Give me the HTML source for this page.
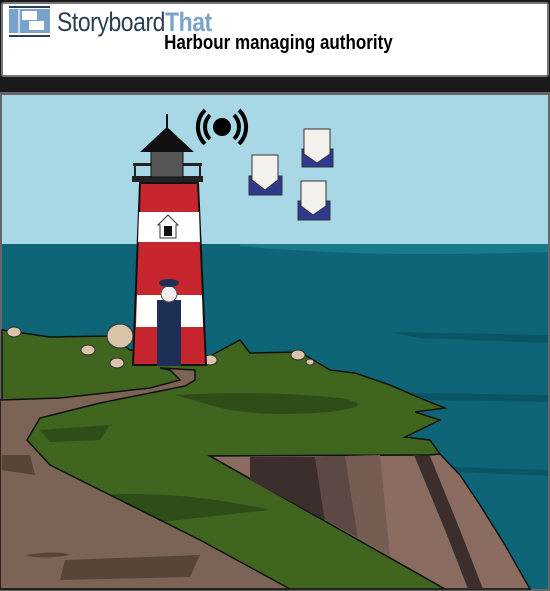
<!DOCTYPE html>
<html><head><style>
body{margin:0;width:550px;height:591px;background:#1b1b1b;overflow:hidden;font-family:"Liberation Sans",sans-serif}
.hdr{position:absolute;left:1px;top:2px;width:544px;height:71px;background:#fff;border:2px solid #777;border-radius:3px}
.logo{position:absolute;left:54px;top:3px;font-size:27px;color:#2c3e55;letter-spacing:-0.5px;transform:scaleX(0.85);transform-origin:left}
.logo b{color:#7aa3cc}
.title{position:absolute;left:0;right:0;top:28px;text-align:center;font-weight:bold;font-size:20px;padding-left:8px;transform:scaleX(0.85)}
.panel{position:absolute;left:0;top:92px;width:550px;height:499px}
</style></head><body>
<div class="hdr">
<svg style="position:absolute;left:6px;top:2px" width="42" height="32"><rect x="0" y="0" width="41" height="2" fill="#2c3e55"/><rect x="0" y="3" width="41" height="24" fill="#7aa3cc"/><rect x="0" y="29" width="41" height="2" fill="#2c3e55"/><rect x="13" y="5" width="15" height="9" fill="#fff"/><rect x="20" y="15" width="15" height="9" fill="#fff"/><rect x="9" y="3" width="2" height="24" fill="#fff" opacity=".6"/></svg>
<div class="logo">Storyboard<b>That</b></div>
<div class="title">Harbour managing authority</div>
</div>
<svg class="panel" width="550" height="499" viewBox="0 92 550 499">
<rect x="0" y="92" width="550" height="499" fill="#666"/>
<rect x="2" y="95" width="546" height="494" fill="#a8d8e6"/>
<rect x="2" y="244" width="546" height="345" fill="#0d6577"/>
<path d="M240 244 L548 244 L548 252 Q420 256 330 252 Q280 250 240 246Z" fill="#1a7a8a"/>
<path d="M390 332 L548 335 L548 343 L420 338Z M410 393 L548 395 L548 402 L430 400Z M450 467 L548 470 L548 476 L460 472Z" fill="#0a5565"/>
<path d="M2 330 L50 337 L110 336 L130 350 L210 356 L240 340 L250 353 L300 352 L330 370 L355 373 L390 385 L420 398 L445 408 L415 412 L440 420 L405 437 L430 440 L440 454 L430 455 L210 456 L445 589 L2 589Z" fill="#40651f" stroke="#111" stroke-width="1.5"/>
<path d="M175 395 Q260 390 340 398 Q380 405 330 412 Q250 418 210 405Z M40 430 L110 425 L100 440 L50 442Z M100 495 Q180 490 270 510 L160 522 Z" fill="#2f4d18"/>
<path d="M0 400 L60 398 L150 388 L180 380 L170 370 L160 368 L195 370 L195 380 L185 386 L100 403 L40 418 L27 440 L50 465 L120 500 L200 540 L290 589 L0 589Z" fill="#7b6455" stroke="#111" stroke-width="1.5"/>
<path d="M25 555 Q60 550 70 555 Q40 560 25 555Z M65 560 L200 555 L190 577 L60 580Z M2 455 L30 455 L35 475 L2 470Z" fill="#574539"/>
<path d="M210 456 L430 455 L440 454 L460 475 L480 505 L505 545 L530 589 L445 589Z" fill="#8a6d60" stroke="#111" stroke-width="1.5"/>
<path d="M250 457 L315 457 L325 520 L250 480Z" fill="#3d2e2e"/>
<path d="M315 457 L345 456 L358 538 L325 520Z" fill="#5d4943"/>
<path d="M345 456 L380 455 L390 556 L358 538Z" fill="#755d53"/>
<path d="M414 455 L430 456 L460 530 L483 589 L468 589 L445 530Z" fill="#3d2e2e"/>
<ellipse cx="120" cy="336" rx="13" ry="12" fill="#d8c4a8" stroke="#333"/>
<ellipse cx="14" cy="332" rx="7" ry="5" fill="#d8c4a8" stroke="#333"/>
<ellipse cx="88" cy="350" rx="7" ry="5" fill="#d8c4a8" stroke="#333"/>
<ellipse cx="117" cy="363" rx="7" ry="5" fill="#d8c4a8" stroke="#333"/>
<ellipse cx="210" cy="360" rx="7" ry="5" fill="#d8c4a8" stroke="#333"/>
<ellipse cx="298" cy="355" rx="7" ry="5" fill="#d8c4a8" stroke="#333"/>
<ellipse cx="310" cy="362" rx="4" ry="3" fill="#d8c4a8" stroke="#333"/>
<polygon points="140,183 198,183 206,365 133,365" fill="#c8262e" stroke="#111" stroke-width="2"/>
<polygon points="139,212 199,212 200,242 138,242" fill="#fff"/>
<polygon points="137,295 202,295 203,327 136,327" fill="#fff"/>
<rect x="132" y="176" width="71" height="6" fill="#222"/>
<rect x="133" y="163" width="69" height="3" fill="#222"/>
<rect x="151" y="150" width="32" height="27" fill="#555" stroke="#111"/>
<rect x="134" y="163" width="2" height="14" fill="#222"/><rect x="199" y="163" width="2" height="14" fill="#222"/>
<polygon points="140,152 194,152 167,127" fill="#111"/>
<rect x="166" y="114" width="2" height="14" fill="#111"/>
<polygon points="158,225 168,215 178,225 176,225 176,238 160,238 160,225" fill="#fff" stroke="#333"/>
<rect x="164" y="226" width="8" height="10" fill="#111"/>
<rect x="157" y="300" width="24" height="66" fill="#1e2f55"/>
<circle cx="169" cy="294" r="8" fill="#eee" stroke="#555"/>
<ellipse cx="169" cy="283" rx="10" ry="4" fill="#1e2f55"/>
<circle cx="222" cy="127" r="9" fill="#000"/>
<path d="M210 115 A17 17 0 0 0 210 139 M234 115 A17 17 0 0 1 234 139 M205 110 A24 24 0 0 0 205 144 M239 110 A24 24 0 0 1 239 144" stroke="#000" stroke-width="4" fill="none"/>
<g stroke="#333" stroke-width="1">
<rect x="249" y="176" width="33" height="19" fill="#2f3a8f"/><polygon points="252,155 278,155 278,180 265,190 252,180" fill="#f4f1ec"/>
<rect x="302" y="149" width="31" height="18" fill="#2f3a8f"/><polygon points="304,129 330,129 330,154 317,163 304,154" fill="#f4f1ec"/>
<rect x="298" y="201" width="32" height="19" fill="#2f3a8f"/><polygon points="301,181 326,181 326,206 313,215 301,206" fill="#f4f1ec"/>
</g>
</svg>
</body></html>
